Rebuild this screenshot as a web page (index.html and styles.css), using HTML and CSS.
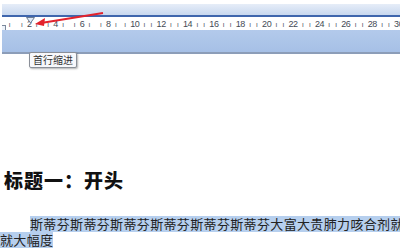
FILE: index.html
```html
<!DOCTYPE html>
<html>
<head>
<meta charset="utf-8">
<link rel="stylesheet" href="styles.css">
</head>
<body>
<div class="bar">
  <div class="bar-top"></div>
  <div class="bar-line"></div>
  <div class="ruler">
    <div class="left-mark"></div>
    <div class="cells">
      <span class="cell first"><i>ı</i></span>
      <span class="cell"><i>ı</i><b>2</b><i>ı</i></span>
      <span class="cell"><i>ı</i><b>4</b><i>ı</i></span>
      <span class="cell"><i>ı</i><b>6</b><i>ı</i></span>
      <span class="cell"><i>ı</i><b>8</b><i>ı</i></span>
      <span class="cell"><i>ı</i><b>10</b><i>ı</i></span>
      <span class="cell"><i>ı</i><b>12</b><i>ı</i></span>
      <span class="cell"><i>ı</i><b>14</b><i>ı</i></span>
      <span class="cell"><i>ı</i><b>16</b><i>ı</i></span>
      <span class="cell"><i>ı</i><b>18</b><i>ı</i></span>
      <span class="cell"><i>ı</i><b>20</b><i>ı</i></span>
      <span class="cell"><i>ı</i><b>22</b><i>ı</i></span>
      <span class="cell"><i>ı</i><b>24</b><i>ı</i></span>
      <span class="cell"><i>ı</i><b>26</b><i>ı</i></span>
      <span class="cell"><i>ı</i><b>28</b><i>ı</i></span>
      <span class="cell"><i>ı</i><b>30</b><i>ı</i></span>
    </div>
    <svg class="marker" width="9" height="7" viewBox="0 0 9 7"><path d="M0.5 0.5 H8.5 L4.5 6 Z" fill="#dfeaf8" stroke="#6b7b92" stroke-width="1"/></svg>
  </div>
  <div class="bar-bottom"></div>
  <div class="tooltip">首行缩进</div>
  <svg class="arrow" width="80" height="20" viewBox="0 0 80 20"><path d="M70 1 L8 11" stroke="#e3222c" stroke-width="2" fill="none"/><path d="M2 12 L12 6 L11 14 Z" fill="#e3222c"/></svg>
</div>
<h1 class="heading">标题一：开头</h1>
<div class="para">
  <div class="line first-line"><span class="sel">斯蒂芬斯蒂芬斯蒂芬斯蒂芬斯蒂芬斯蒂芬大富大贵肺力咳合剂就</span></div>
  <div class="line"><span class="sel">就大幅度</span></div>
</div>
</body>
</html>
```

FILE: styles.css
```css
html, body {
  margin: 0;
  padding: 0;
  background: #ffffff;
  font-family: "Noto Sans CJK SC", "Liberation Sans", sans-serif;
}
body {
  width: 411px;
  height: 250px;
  overflow: hidden;
  padding-top: 4px;
  box-sizing: border-box;
}
.bar {
  position: relative;
  width: 398px;
  margin-left: 2px;
}
.bar-top {
  height: 11px;
  background: linear-gradient(#e6edf8, #c8d8ef);
}
.bar-line {
  height: 2px;
  background: #3f66ad;
}
.ruler {
  position: relative;
  height: 13px;
  background: #ffffff;
  overflow: hidden;
}
.cells {
  display: flex;
  padding-left: 1px;
}
.cell {
  flex: 0 0 26.4px;
  display: flex;
  justify-content: center;
  align-items: flex-end;
  gap: 4px;
  height: 13px;
  padding-bottom: 1px;
  box-sizing: border-box;
  font-family: "Liberation Sans", sans-serif;
  font-size: 9px;
  line-height: 9px;
  color: #444a55;
}
.cell.first {
  flex: 0 0 13px;
}
.cell i {
  font-style: normal;
  font-size: 8px;
  line-height: 8px;
  color: #5d6572;
}
.cell b {
  font-weight: normal;
  letter-spacing: -0.4px;
}
.left-mark {
  position: absolute;
  left: 0;
  top: 8px;
  width: 3px;
  height: 5px;
  border: 1px solid #7a889c;
  border-left: none;
  background: #eef3fa;
}
.marker {
  position: absolute;
  left: 24px;
  top: 0;
}
.bar-bottom {
  height: 22px;
  background: linear-gradient(#b3caeb, #a6c0e6);
  border-bottom: 2px solid #8c9db8;
}
.tooltip {
  position: absolute;
  left: 27px;
  top: 48px;
  padding: 1px 3px;
  font-size: 10px;
  line-height: 12px;
  color: #333;
  background: #f7f8fb;
  border: 1px solid #8a8f98;
  border-radius: 2px;
  box-shadow: 1px 1px 2px rgba(0,0,0,0.3);
}
.arrow {
  position: absolute;
  left: 31px;
  top: 8px;
}
.heading {
  margin: 114px 0 0 4px;
  font-size: 19px;
  line-height: 24px;
  font-weight: 900;
  color: #111;
  letter-spacing: 1px;
}
.para {
  margin-top: 24px;
  width: 400px;
  font-size: 13px;
  line-height: 16px;
  color: #222;
}
.line {
  white-space: nowrap;
  overflow: hidden;
  height: 16px;
  letter-spacing: 0.35px;
}
.first-line {
  padding-left: 30px;
}
.sel {
  background: #b6cfee;
}
```
